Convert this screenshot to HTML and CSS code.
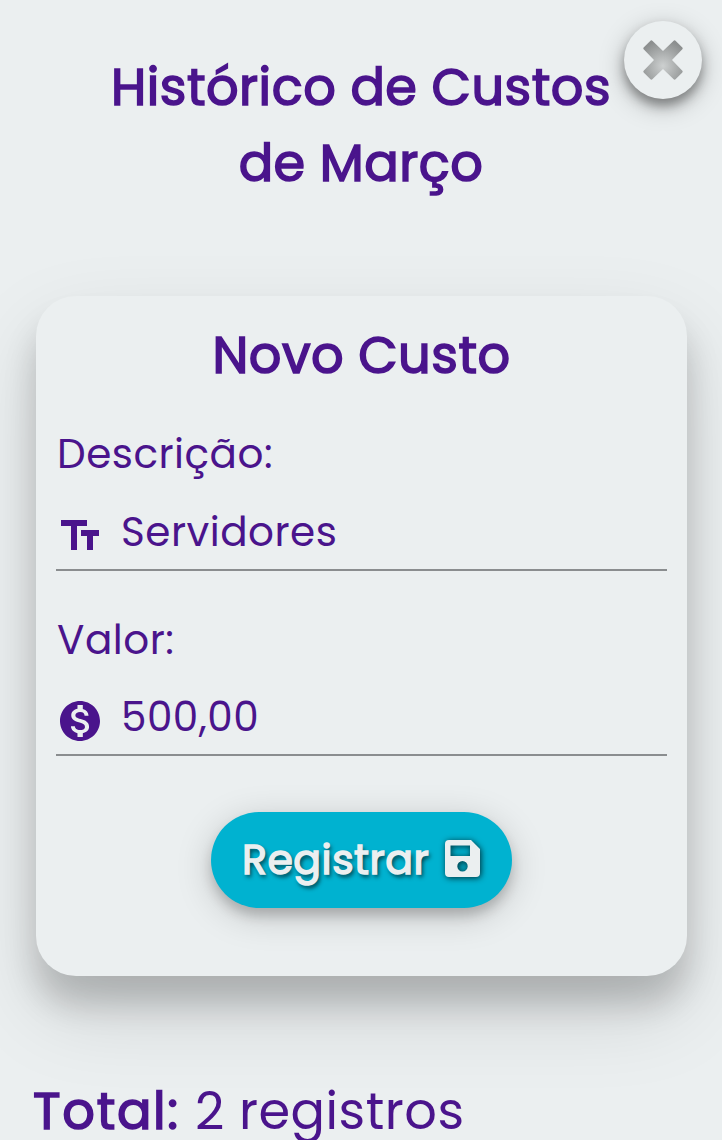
FILE: index.html
```html
<!DOCTYPE html>
<html lang="pt-BR">
<head>
<meta charset="utf-8">
<title>Histórico de Custos</title>
<link rel="stylesheet" href="styles.css">
</head>
<body>
<main class="page">
  <button class="close" aria-label="Fechar">
    <svg class="close-icon" viewBox="0 0 40 40">
      <defs><radialGradient id="steel" cx=".5" cy=".65" r=".65"><stop offset="0" stop-color="#cdd0d0"/><stop offset="1" stop-color="#8c8f8f"/></radialGradient></defs>
      <path fill="url(#steel)" d="M7.2.9Q8.4-.3 9.6.9L20 11 30.400.9Q31.600-.3 32.800.9L39.100 7.200Q40.300 8.400 39.100 9.600L29 20 39.100 30.400Q40.300 31.600 39.100 32.800L32.800 39.100Q31.600 40.300 30.400 39.100L20 29 9.600 39.100Q8.400 40.300 7.200 39.100L.9 32.800Q-.3 31.600.9 30.400L11 20 .9 9.600Q-.3 8.400.9 7.200Z"/>
    </svg>
  </button>
  <h1 class="title">Histórico de Custos<br>de Março</h1>
  <form class="card">
    <h2 class="card-title">Novo Custo</h2>
    <div class="field">
      <label class="label">Descrição:</label>
      <div class="control">
        <svg class="icon" viewBox="0 0 24 24"><path d="M2.500 4v3h5v12h3V7h5V4zm19 5h-9v3h3v7h3v-7h3z"/></svg>
        <span class="value">Servidores</span>
      </div>
    </div>
    <div class="field field-amount">
      <label class="label">Valor:</label>
      <div class="control">
        <svg class="icon" viewBox="0 0 24 24"><path d="M12 2C6.480 2 2 6.480 2 12s4.480 10 10 10 10-4.480 10-10S17.520 2 12 2zm1.410 16.090V20h-2.670v-1.930c-1.710-.36-3.160-1.460-3.270-3.400h1.960c.1 1.050.82 1.870 2.650 1.870 1.960 0 2.400-.98 2.400-1.590 0-.83-.44-1.610-2.670-2.140-2.480-.6-4.180-1.620-4.180-3.670 0-1.720 1.390-2.840 3.110-3.210V4h2.670v1.950c1.860.45 2.790 1.860 2.850 3.390H14.300c-.05-1.110-.64-1.870-2.220-1.870-1.500 0-2.400.68-2.400 1.640 0 .84.65 1.390 2.670 1.910s4.180 1.390 4.180 3.910c-.01 1.830-1.380 2.830-3.120 3.160z"/></svg>
        <span class="value">500,00</span>
      </div>
    </div>
    <button class="submit" type="button">
      <span class="submit-text">Registrar</span>
      <svg class="save" viewBox="0 0 36 37"><path fill-rule="evenodd" d="M4 0H26L35 9V33Q35 37 31 37H4Q0 37 0 33V4Q0 0 4 0ZM5.500 5.500V16H25V5.500ZM17.500 21A5.200 5.200 0 1 0 17.500 31.400A5.200 5.200 0 1 0 17.500 21Z"/></svg>
    </button>
  </form>
  <p class="total"><strong class="total-label">Total:</strong><span class="total-value">2 registros</span></p>
</main>
</body>
</html>
```
FILE: styles.css
```css
* { box-sizing: border-box; margin: 0; }
html, body { height: 1140px; overflow: hidden; }
body {
  background: #ebeff0;
  color: #4a148c;
  font-family: Poppins, Inter, "Open Sans", sans-serif;
  font-weight: 400;
  font-kerning: none;
  letter-spacing: .5px;
}
button { border: 0; padding: 0; font: inherit; letter-spacing: inherit; }
.page { position: relative; padding: 48px 36px 0; }
.close {
  position: absolute; top: 21px; right: 20px;
  display: grid; place-items: center;
  width: 78px; height: 78px; border-radius: 50%;
  background: #ebeff0;
  box-shadow: 0 7px 11px rgba(0,0,0,.34), 0 7px 26px rgba(0,0,0,.26);
}
.close-icon { width: 40px; height: 40px; }
.title, .card-title, .total-label { font-weight: 400; -webkit-text-stroke: 1.6px currentColor; }
.title { height: 247px; margin-top: 1px; text-align: center; font-size: 51px; line-height: 76px; white-space: nowrap; }
.card {
  width: 651px; height: 680px; padding: 20px 20px 0; border-radius: 40px;
  background: #ebeff0;
  box-shadow: 0 28px 32px rgba(0,0,0,.175), 0 36px 84px rgba(0,0,0,.13);
}
.card-title { text-align: center; font-size: 51px; line-height: 78px; }
.field { height: 157px; margin-top: 20px; }
.label { display: block; height: 77px; padding-left: 1px; line-height: 80px; font-size: 40.5px; }
.control { display: flex; align-items: center; height: 80px; border-bottom: 2px solid #8a8d8f; }
.field-amount { margin-top: 28px; }
.field-amount .label { line-height: 82px; }
.icon { width: 48px; height: 48px; margin-top: 12px; fill: #4a148c; }
.value { margin: 3px 0 0 17px; font-size: 40.5px; line-height: 77px; }
.submit {
  display: flex; align-items: center;
  width: 301px; height: 96px; margin: 56px auto 0; padding-left: 31px;
  border-radius: 48px; background: #00b2d0; color: #ebeff0;
  box-shadow: 0 8px 12px rgba(0,0,0,.18), 0 8px 36px rgba(0,0,0,.18);
}
.submit-text { width: 203px; margin-top: -1px; text-align: left; font-size: 41px; -webkit-text-stroke: 1.5px currentColor; text-shadow: 2px 3px 4px rgba(0,0,0,.7); }
.save { width: 36px; height: 37px; margin-top: -4px; fill: #ebeff0; filter: drop-shadow(1px 1px 3px rgba(0,0,0,.75)); }
.total { display: flex; margin: 95px 0 0 -3px; height: 69px; line-height: 80px; font-size: 51px; white-space: nowrap; }
.total-label { width: 162px; letter-spacing: 1.7px; }
```
